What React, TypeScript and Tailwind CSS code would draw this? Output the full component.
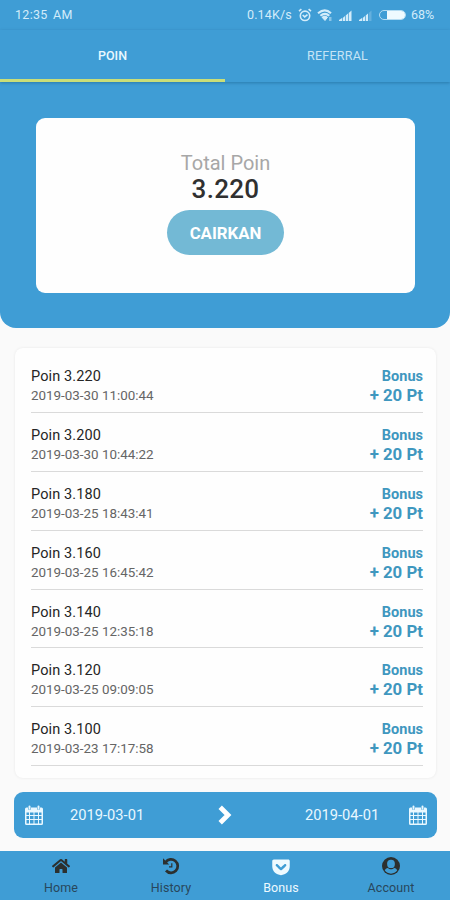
import React from 'react';
import { FaHome, FaGetPocket } from 'react-icons/fa';

const history = [
  { poin: '3.220', date: '2019-03-30 11:00:44' },
  { poin: '3.200', date: '2019-03-30 10:44:22' },
  { poin: '3.180', date: '2019-03-25 18:43:41' },
  { poin: '3.160', date: '2019-03-25 16:45:42' },
  { poin: '3.140', date: '2019-03-25 12:35:18' },
  { poin: '3.120', date: '2019-03-25 09:09:05' },
  { poin: '3.100', date: '2019-03-23 17:17:58' },
];

const CalendarIcon = () => (
  <svg viewBox="0 0 18 20" className="w-[18px] h-5" fill="none">
    <path fill="currentColor" fillRule="evenodd" d="M1.5 2.5H3v2h3v-2h6v2h3v-2h1.5Q18 2.5 18 4v14.5Q18 20 16.5 20h-15Q0 20 0 18.5V4q0-1.5 1.5-1.5ZM1.5 7.5V10H4V7.5Zm3.5 0V10h3.500V7.500Zm4.500 0V10H13V7.500Zm4.500 0V10h2.500V7.500ZM1.500 11v3H4v-3ZM5 11v3h3.500v-3Zm4.500 0v3H13v-3Zm4.500 0v3h2.500v-3ZM1.500 15v3.500H4V15ZM5 15v3.500h3.500V15Zm4.500 0v3.500H13V15Zm4.500 0v3.500h2.500V15Z" />
    <path stroke="currentColor" strokeWidth="2" strokeLinecap="round" d="M4.500 1.500v2M13.500 1.500v2" />
  </svg>
);

const ChevronIcon = () => (
  <svg viewBox="0 0 14 20" className="w-[14px] h-5" fill="none">
    <path stroke="currentColor" strokeWidth="4.800" d="M2.200 2.200 10 10l-7.800 7.800" />
  </svg>
);

const HistoryIcon = () => (
  <svg viewBox="0 0 18 18" className="w-[18px] h-[18px]" fill="none" stroke="currentColor">
    <path strokeWidth="2.700" d="M3.600 5.200A6.700 6.700 0 1 1 4 13.500" />
    <path fill="currentColor" stroke="none" d="M1 1.300 7.200 7.500H1Z" />
    <path strokeWidth="1.200" d="M9.800 6.300v3.500H7" />
  </svg>
);

const AccountIcon = () => (
  <svg viewBox="0 0 18 18" className="w-[18px] h-[18px]">
    <circle cx="9" cy="9" r="9" fill="currentColor" />
    <path fill="#3f9dd5" d="M2.800 13.500C3.200 12 4.400 11.200 5.800 11 7.600 12.800 10.400 12.800 12.200 11c1.400.2 2.600 1 3 2.500A7.700 7.700 0 0 1 2.800 13.500Z" />
    <ellipse cx="9" cy="6.900" rx="3.900" ry="4.200" fill="#3f9dd5" />
  </svg>
);

const StatusBar = () => (
  <div className="flex items-center justify-between h-[30px] pl-[15px] pr-[14px] text-[12.500px] text-[#d3ecfa]">
    <span className="w-[60px] whitespace-nowrap tracking-[0.300px] [word-spacing:2px]">12:35 AM</span>
    <div className="flex items-center">
      <span className="w-[45px] whitespace-nowrap tracking-[0.150px]">0.14K/s</span>
      {/* Alarm */}
      <svg viewBox="0 0 14 14" className="w-[14px] h-[14px] ml-[6px]" fill="none" stroke="currentColor" strokeWidth="1.600">
        <circle cx="7" cy="7.800" r="4.700" />
        <path d="M1 3.200 3.400 1.200M13 3.200 10.600 1.200M4.700 7l2 1.900 2.800-2.300" />
      </svg>
      {/* Wifi */}
      <svg viewBox="0 0 16 12" className="w-4 h-3 ml-[5px]" fill="none" stroke="currentColor" strokeWidth="2.100">
        <path d="M1 4.200Q8-1.600 14 4.200M3.400 6.800Q8 3 12.300 6.800" />
        <path d="m8 11.500-3-3.300q3-2.200 5.500 0ZM12 9h2.500M12 11h2.500" fill="currentColor" strokeWidth="1" />
      </svg>
      {/* Signal */}
      <svg viewBox="0 0 13 11" className="w-[13px] h-[11px] ml-[6px]" fill="currentColor">
        <path d="M0 10l3-2v3H0ZM3.700 8l2.300-2v5H3.700ZM6.700 5.500l2.300-2V11H6.700ZM9.700 3 12.500.500V11H9.700Z" />
      </svg>
      <svg viewBox="0 0 13 11" className="w-[13px] h-[11px] ml-[7px]" fill="currentColor">
        <path d="M0 10l3-2v3H0ZM3.700 8l2.300-2v5H3.700ZM6.700 5.500l2.300-2V11H6.700Z" />
        <path opacity=".25" d="M9.700 3 12.500.500V11H9.700Z" />
      </svg>
      <div className="flex justify-end w-[27px] h-[10px] ml-[7px] border border-[#b4dcf2] rounded-full overflow-hidden">
        <div className="w-[18px] h-full bg-[#eefaff]" />
      </div>
      <span className="w-[25px] ml-[5px] whitespace-nowrap">68%</span>
    </div>
  </div>
);

const TabBar = () => (
  <div className="relative flex h-[52px] text-[12.500px] text-[#c5e4f5] shadow-[0_1px_3px_rgba(0,60,100,0.35)]">
    <div className="flex-1 pt-[17px] text-center leading-[18px] font-medium text-[#e9f8ff] border-b-[3px] border-[#cade78]">
      POIN
    </div>
    <div className="flex-1 pt-[17px] text-center leading-[18px] tracking-[0.250px]">REFERRAL</div>
  </div>
);

const BottomNav = () => (
  <nav className="grid grid-cols-4 shrink-0 h-[49px] pl-[6px] pr-1 bg-[#3f9dd5] text-[12.500px] tracking-[0.100px] text-[#28475c]">
    <div className="flex flex-col items-center pt-[6px]">
      <FaHome className="w-[18px] h-[18px] text-[#2c302f]" />
      <span className="mt-[3px] leading-[19px]">Home</span>
    </div>
    <div className="flex flex-col items-center pt-[6px]">
      <div className="text-[#2c302f]"><HistoryIcon /></div>
      <span className="mt-[3px] leading-[19px]">History</span>
    </div>
    <div className="flex flex-col items-center pt-[6px] text-[#eefaff]">
      <FaGetPocket className="w-[20px] h-[20px]" />
      <span className="mt-px leading-[19px]">Bonus</span>
    </div>
    <div className="flex flex-col items-center pt-[6px]">
      <div className="text-[#2c302f]"><AccountIcon /></div>
      <span className="mt-[3px] leading-[19px]">Account</span>
    </div>
  </nav>
);

const App = () => {
  return (
    <div className="flex flex-col w-[450px] h-[900px] bg-[#fafafa] overflow-hidden font-['Roboto',sans-serif]">
      <header className="shrink-0 h-[328px] bg-[#3f9dd5] rounded-b-[16px]">
        <StatusBar />
        <TabBar />
        {/* Total points */}
        <div className="flex flex-col items-center w-[379px] h-[175px] mt-9 ml-9 pt-[33px] bg-[#fefefe] rounded-[9px]">
          <p className="text-[20px] leading-6 text-[#a7a7a7]">Total Poin</p>
          <p className="text-[26px] leading-7 font-medium tracking-[0.300px] text-[#303030]">3.220</p>
          <button className="w-[117px] h-[45px] mt-[7px] pt-[2px] rounded-full bg-[#73b9d5] text-[16.800px] font-bold text-white">
            CAIRKAN
          </button>
        </div>
      </header>

      {/* Points history */}
      <section className="shrink-0 mt-5 ml-[15px] mr-[14px] h-[430px] pt-[6px] pl-4 pr-[13px] bg-[#fefefe] rounded-lg shadow-[0_0_3px_rgba(0,0,0,0.08)]">
        {history.map((item) => (
          <div key={item.poin} className="flex justify-between h-[58.900px] pt-[12px] border-b border-[#dadada]">
            <div>
              <p className="pt-px text-[14.500px] leading-[19px] tracking-[0.100px] text-[#252525]">Poin {item.poin}</p>
              <p className="text-[13.400px] leading-5 text-[#656565]">{item.date}</p>
            </div>
            <div className="text-right text-[#3f97bf]">
              <p className="pt-px text-[14.500px] leading-[19px] font-bold">Bonus</p>
              <p className="text-[16.800px] leading-[19px] font-bold">+ 20 Pt</p>
            </div>
          </div>
        ))}
      </section>

      {/* Date range */}
      <div className="flex items-center shrink-0 h-[46px] mt-[14px] mb-[13px] ml-[14px] mr-[13px] pl-[11px] pr-[10px] bg-[#3f9dd5] rounded-[9px] text-[#e9f8ff]">
        <CalendarIcon />
        <span className="w-[76px] ml-[27px] pt-px text-[14.700px] whitespace-nowrap">2019-03-01</span>
        <div className="ml-[72px] text-white"><ChevronIcon /></div>
        <span className="w-[76px] ml-auto mr-[28px] pt-px text-[14.700px] whitespace-nowrap">2019-04-01</span>
        <CalendarIcon />
      </div>

      <BottomNav />
    </div>
  );
};

export default App;
